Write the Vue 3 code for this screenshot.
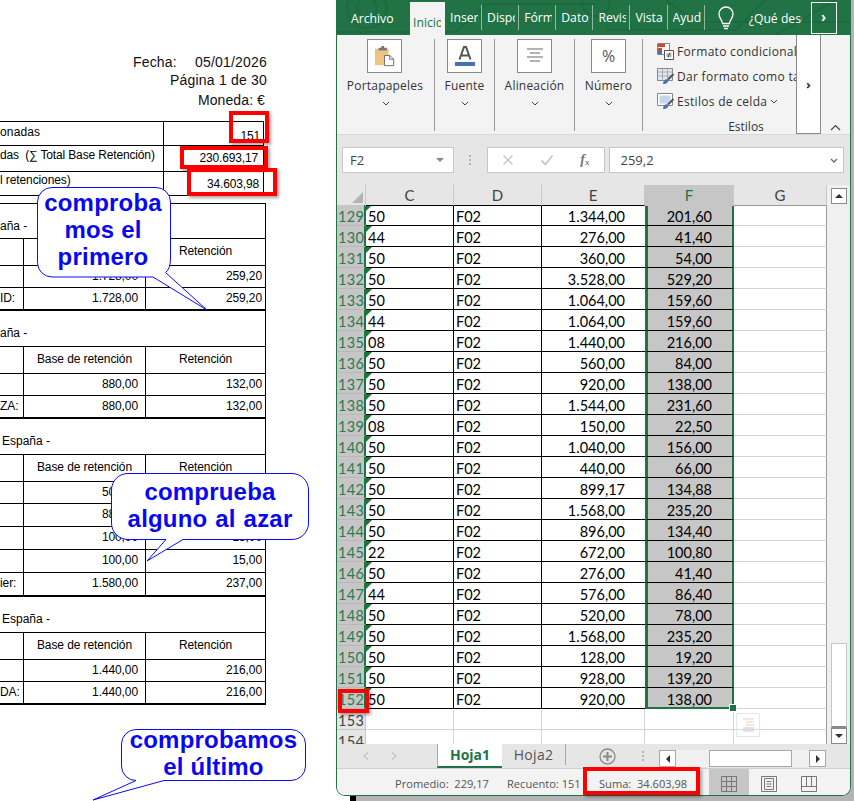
<script setup>
const sections = [
  { title: 'aña -', indent: false, rows: [['', '1.728,00', '259,20'], ['ID:', '1.728,00', '259,20']] },
  { title: 'aña -', indent: false, rows: [['', '880,00', '132,00'], ['ZA:', '880,00', '132,00']] },
  { title: 'España -', indent: true, rows: [['', '500,00', '75,00'], ['', '880,00', '132,00'], ['', '100,00', '15,00'], ['', '100,00', '15,00'], ['ier:', '1.580,00', '237,00']] },
  { title: 'España -', indent: true, rows: [['', '1.440,00', '216,00'], ['DA:', '1.440,00', '216,00']] }
]
const tabs = ['Inicio', 'Insertar', 'Disposición', 'Fórmulas', 'Datos', 'Revisar', 'Vista', 'Ayuda']
const raw = `129 50 1.344,00 201,60
130 44 276,00 41,40
131 50 360,00 54,00
132 50 3.528,00 529,20
133 50 1.064,00 159,60
134 44 1.064,00 159,60
135 08 1.440,00 216,00
136 50 560,00 84,00
137 50 920,00 138,00
138 50 1.544,00 231,60
139 08 150,00 22,50
140 50 1.040,00 156,00
141 50 440,00 66,00
142 50 899,17 134,88
143 50 1.568,00 235,20
144 50 896,00 134,40
145 22 672,00 100,80
146 50 276,00 41,40
147 44 576,00 86,40
148 50 520,00 78,00
149 50 1.568,00 235,20
150 50 128,00 19,20
151 50 928,00 139,20
152 50 920,00 138,00`
const rows = raw.split('\n').map(l => l.split(' '))
const groups = [
  { label: 'Portapapeles', cls: 'g1', icon: 'paste' },
  { label: 'Fuente', cls: 'g2', icon: 'font' },
  { label: 'Alineación', cls: 'g3', icon: 'align' },
  { label: 'Número', cls: 'g4', icon: 'num' }
]
</script>

<template>
  <div class="page">
    <section class="doc">
      <div class="dochead">
        <div class="fecha"><span>Fecha:</span><span>05/01/2026</span></div>
        <div>Página 1 de 30</div>
        <div class="moneda">Moneda: €</div>
      </div>
      <div class="summary">
        <div class="sumrow r1"><span class="sl">onadas</span><span class="sv">151</span></div>
        <div class="sumrow r2"><span class="sl">das&nbsp; (∑ Total Base Retención)</span><span class="sv">230.693,17</span></div>
        <div class="sumrow r3"><span class="sl">l retenciones)</span><span class="sv">34.603,98</span></div>
      </div>
      <div class="sec" v-for="(s, si) in sections" :key="si" :class="{ first: si === 0 }">
        <div class="sectitle" :class="{ indent: s.indent }">{{ s.title }}</div>
        <div class="tr head"><div></div><div>Base de retención</div><div>Retención</div></div>
        <div class="tr" v-for="(r, i) in s.rows" :key="i" :class="{ tall: s.rows.length > 2 && i > 0 }">
          <div class="lab">{{ r[0] }}</div><div class="n1">{{ r[1] }}</div><div class="n2">{{ r[2] }}</div>
        </div>
      </div>
    </section>

    <i class="under"></i>
    <i class="blackbit"></i>

    <section class="xl">
      <header class="titlebar">
        <svg class="pattern" viewBox="0 0 515 35" preserveAspectRatio="none">
          <g fill="none" stroke="#1d6a3f" stroke-width="2">
            <circle cx="30" cy="8" r="20" /><circle cx="30" cy="8" r="10" />
            <path d="M0 32H120L150 4H260M270 30H400L430 0M330 0L360 22H515M440 35L500 0" />
            <circle cx="260" cy="2" r="14" />
          </g>
        </svg>
        <div class="archivo">Archivo</div>
        <div class="tab" v-for="(t, i) in tabs" :key="t" :class="{ on: i === 0 }"><span>{{ t }}</span></div>
        <svg class="bulb" viewBox="0 0 20 26" width="20" height="26">
          <path d="M6.5 18.5C6.5 15 3 13.5 3 9a7 7 0 0 1 14 0c0 4.500-3.500 6-3.500 9.500z" fill="none" stroke="#fff" stroke-width="1.300" />
          <path d="M7 21h6M8 23.500h4" stroke="#fff" stroke-width="1.300" />
        </svg>
        <div class="search"><span>¿Qué desea hacer?</span></div>
        <div class="tabmore">›</div>
      </header>

      <div class="ribbon">
        <div class="group" v-for="g in groups" :key="g.label" :class="g.cls">
          <div class="bigbtn">
            <svg v-if="g.icon === 'paste'" viewBox="0 0 24 24" width="22" height="22">
              <path d="M1 4h15v18H1z" fill="#ecc681" />
              <path d="M5 3h3V1h3v2h3v3H5z" fill="#777" />
              <path d="M11.500 11.500h6l4 4v7h-10z" fill="#fff" stroke="#666" />
              <path d="M17 11.500v4h4.500" fill="none" stroke="#666" />
            </svg>
            <svg v-else-if="g.icon === 'font'" viewBox="0 0 24 24" width="24" height="24">
              <path d="M6.500 15.500 11 3h2l4.500 12.500M8 11.500h8" fill="none" stroke="#555" stroke-width="2" />
              <path d="M2 18h20v4H2z" fill="#4472b4" />
            </svg>
            <svg v-else-if="g.icon === 'align'" viewBox="0 0 24 24" width="24" height="24">
              <path d="M4 5h16M7 9h10M4 13h16M7 17h10" stroke="#666" stroke-width="1" />
            </svg>
            <span v-else class="pct">%</span>
          </div>
          <div class="glabel">{{ g.label }}</div>
          <svg class="chev" viewBox="0 0 8 5" width="8" height="5"><path d="M1 1l3 3 3-3" fill="none" stroke="#444" /></svg>
        </div>
        <div class="group g5">
          <div class="srow">
            <svg viewBox="0 0 17 17" width="17" height="17">
              <path d="M0.500 0.500h12v11h-12z" fill="#fff" stroke="#888" />
              <path d="M1 1h7v3H1z" fill="#d2492a" /><path d="M1 5h4v3H1z" fill="#d2492a" /><path d="M5 8H1v3h4z" fill="#4472b4" />
              <path d="M7.500 7.500h9v9h-9z" fill="#fff" stroke="#555" />
              <path d="M9.500 11h5M9.500 13h5M13 9.500l-2 5" stroke="#444" stroke-width=".8" />
            </svg>
            <span>Formato condicional</span>
          </div>
          <div class="srow">
            <svg viewBox="0 0 17 17" width="17" height="17">
              <path d="M0.500 0.500h15v12h-15z" fill="#dfe7f2" stroke="#888" />
              <path d="M0.500 4h15M0.500 8h15M5.500 .5v12M10.500 .5v12" stroke="#999" stroke-width=".7" />
              <path d="M16.500 6 11 11.500" stroke="#555" stroke-width="2" />
              <path d="M6 16c0-4 3-5.500 5-4.500 1 2-1 5-5 4.500z" fill="#3f78c0" />
            </svg>
            <span>Dar formato como tabla</span>
          </div>
          <div class="srow">
            <svg viewBox="0 0 17 17" width="17" height="17">
              <path d="M0.500 0.500h15v12h-15z" fill="#fff" stroke="#888" />
              <path d="M2.500 2.500h11v8h-11z" fill="#c5d5ea" />
              <path d="M16.500 6 11 11.500" stroke="#555" stroke-width="2" />
              <path d="M6 16c0-4 3-5.500 5-4.500 1 2-1 5-5 4.500z" fill="#3f78c0" />
            </svg>
            <span>Estilos de celda</span>
            <svg class="chevs" viewBox="0 0 8 5" width="8" height="5"><path d="M1 1l3 3 3-3" fill="none" stroke="#444" /></svg>
          </div>
          <div class="estilos">Estilos</div>
        </div>
        <div class="ribmore">›</div>
        <div class="collapse">
          <svg viewBox="0 0 11 7" width="11" height="7"><path d="M1 6l4.500-4.500L10 6" fill="none" stroke="#444" stroke-width="1.200" /></svg>
        </div>
      </div>

      <div class="fbar">
        <div class="namebox"><span>F2</span><i class="tri"></i></div>
        <div class="dots"><b></b><b></b><b></b></div>
        <div class="fxbox">
          <svg viewBox="0 0 12 12" width="12" height="12"><path d="M1.500 1.500l9 9M10.500 1.500l-9 9" stroke="#c8c8c8" stroke-width="1.500" /></svg>
          <svg viewBox="0 0 14 12" width="14" height="12"><path d="M1.500 6.500l4 4 7-9" fill="none" stroke="#c8c8c8" stroke-width="1.800" /></svg>
          <span class="fx">f<sub>x</sub></span>
        </div>
        <div class="input"><span>259,2</span><svg viewBox="0 0 8 5" width="8" height="5"><path d="M1 1l3 3 3-3" fill="none" stroke="#666" stroke-width="1.300" /></svg></div>
      </div>

      <div class="gridzone">
        <div class="sheet">
          <div class="colhead">
            <div class="corner"><i></i></div>
            <div class="cc">C</div><div class="cd">D</div><div class="ce">E</div><div class="cf sel">F</div><div class="cg">G</div>
          </div>
          <div class="row" v-for="(r, i) in rows" :key="r[0]" :class="{ last: i === rows.length - 1 }">
            <div class="rh">{{ r[0] }}</div>
            <div class="c cc"><i class="flag"></i>{{ r[1] }}</div>
            <div class="c cd">F02</div>
            <div class="c ce">{{ r[2] }}</div>
            <div class="c cf">{{ r[3] }}<i v-if="i === rows.length - 1" class="handle"></i></div>
            <div class="c cg"></div>
          </div>
          <div class="row blank" v-for="n in [153, 154]" :key="n">
            <div class="rh">{{ n }}</div>
            <div class="c cc"></div><div class="c cd"></div><div class="c ce"></div><div class="c cf"></div><div class="c cg"></div>
          </div>
          <svg class="quick" viewBox="0 0 24 24" width="24" height="24">
            <path d="M.5.5h23v23H.5z" fill="none" stroke="#dfeae5" />
            <path d="M7 6h11M10 9h8" stroke="#f7e6da" stroke-width="2" />
            <path d="M10 12h8" stroke="#f7e6da" stroke-width="2" />
            <path d="M7 15h11M7 18h11" stroke="#dbe6f2" stroke-width="2" />
          </svg>
        </div>
        <div class="vscroll">
          <div class="sbtn"><i class="up"></i></div>
          <div class="thumb"></div>
          <div class="sbtn"><i class="down"></i></div>
        </div>
      </div>

      <div class="sheetbar">
        <div class="nav">
          <svg viewBox="0 0 6 8" width="6" height="8"><path d="M5 .5 1 4l4 3.500" fill="none" stroke="#c4c4c4" stroke-width="1.300" /></svg>
          <svg viewBox="0 0 6 8" width="6" height="8"><path d="M1 .5 5 4 1 7.500" fill="none" stroke="#c4c4c4" stroke-width="1.300" /></svg>
        </div>
        <div class="sheettab active">Hoja1</div>
        <div class="sheettab">Hoja2</div>
        <svg class="plus" viewBox="0 0 17 17" width="17" height="17">
          <circle cx="8.500" cy="8.500" r="7.500" fill="none" stroke="#8a8a8a" stroke-width="1.300" />
          <path d="M8.500 4v9M4 8.500h9" stroke="#8a8a8a" stroke-width="2" />
        </svg>
        <div class="dots small"><b></b><b></b><b></b></div>
        <div class="hscroll">
          <div class="hbtn"><i class="lt"></i></div>
          <div class="hthumb"></div>
          <div class="hbtn"><i class="rt"></i></div>
        </div>
      </div>

      <footer class="status">
        <span class="st1">Promedio:&nbsp; 229,17</span>
        <span class="st2">Recuento: 151</span>
        <span class="st3">Suma:&nbsp; 34.603,98</span>
        <div class="view active">
          <svg viewBox="0 0 16 16" width="16" height="16"><path d="M.5.5h15v15H.5zM5.500.5v15M10.500.5v15M.5 5.500h15M.5 10.500h15" fill="none" stroke="#777" /></svg>
        </div>
        <div class="view">
          <svg viewBox="0 0 16 16" width="16" height="16"><path d="M.5.5h15v15H.5z" fill="none" stroke="#777" /><path d="M3.500 2.500h9v11h-9zM5.500 5.500h5M5.500 8h5M5.500 10.500h5" fill="none" stroke="#777" /></svg>
        </div>
        <div class="view">
          <svg viewBox="0 0 16 16" width="16" height="16"><path d="M.5.5h15v15H.5zM.5 10.500h15M5.500.5v10M10.500.5v10" fill="none" stroke="#777" /></svg>
        </div>
      </footer>
    </section>

    <div class="callout c1">
      <svg viewBox="0 0 134 123" width="134" height="123">
        <path d="M15 .5H119a14.500 14.500 0 0 1 14.500 14.500V71q0 11-5 14.500L170 123 116 90H15A14.500 14.500 0 0 1 .5 75.500V15A14.500 14.500 0 0 1 15 .5z" fill="#fff" stroke="#0a0aff" stroke-width="1" />
      </svg>
      <div class="ctext">comproba<br />mos el<br />primero</div>
    </div>
    <div class="callout c2">
      <svg viewBox="0 0 198 88" width="198" height="88">
        <path d="M17 .5H181a16.500 16.500 0 0 1 16.500 16.500V50A16.500 16.500 0 0 1 181 66.500H72L36 88 55 66.500H17A16.500 16.500 0 0 1 .5 50V17A16.500 16.500 0 0 1 17 .5z" fill="#fff" stroke="#0a0aff" stroke-width="1" />
      </svg>
      <div class="ctext">comprueba<br /><span class="ws">alguno al azar</span></div>
    </div>
    <div class="callout c3">
      <svg viewBox="0 0 185 72" width="185" height="72">
        <path d="M15 .5H170a14.500 14.500 0 0 1 14.500 14.500V37A14.500 14.500 0 0 1 170 51.500H43L-28 71 15 51.500A14.500 14.500 0 0 1 .5 37V15A14.500 14.500 0 0 1 15 .5z" fill="#fff" stroke="#0a0aff" stroke-width="1" />
      </svg>
      <div class="ctext">comprobamos<br />el último</div>
    </div>

    <i class="mark m1"></i><i class="mark m2"></i><i class="mark m3"></i><i class="mark m4"></i><i class="mark m5"></i>
  </div>
</template>

<style scoped>
.page { position: relative; display: flex; width: 854px; height: 801px; overflow: hidden; background: #b4b4b4; font-family: "Liberation Sans", Arial, sans-serif; color: #000; }
.doc { width: 336px; height: 801px; flex: none; background: #fff; overflow: hidden; font-size: 12px; }
.under { position: absolute; left: 336px; top: 786px; width: 14px; height: 15px; background: #fff; }
.blackbit { position: absolute; left: 350px; top: 796px; width: 6px; height: 5px; background: #000; }
.dochead { width: 267px; padding-top: 53px; text-align: right; font-size: 14px; line-height: 19px; color: #111; letter-spacing: .2px; }
.dochead > div:nth-child(2) { margin-top: -1px; }
.fecha { display: flex; justify-content: flex-end; gap: 18px; }
.moneda { margin-top: 1px; padding-right: 2px; letter-spacing: .1px; }
.summary { width: 264px; margin-top: 11px; border-top: 1px solid #000; }
.sumrow { display: grid; grid-template-columns: 163px 1fr; border-bottom: 1px solid #000; border-right: 1px solid #000; box-sizing: border-box; }
.r1 { height: 24px; } .r2 { height: 26px; } .r3 { height: 24px; }
.sl { padding-top: 3px; letter-spacing: .15px; white-space: nowrap; line-height: 15px; }
.r2 .sl { padding-top: 2px; letter-spacing: -.15px; } .r3 .sl { padding-top: 1px; letter-spacing: -.1px; }
.sv { border-left: 1px solid #000; text-align: right; padding: 5px 3px 0 0; line-height: 15px; letter-spacing: -.15px; }
.r1 .sv { padding-top: 7px; } .r2 .sv { padding-right: 5px; } .r3 .sv { padding-top: 5px; padding-right: 4px; }
.sec { width: 266px; box-sizing: border-box; border-right: 1px solid #000; border-bottom: 2px solid #000; }
.first { margin-top: 7px; border-top: 1px solid #000; }
.sectitle { height: 35px; box-sizing: border-box; padding-top: 15px; line-height: 14px; }
.first .sectitle { height: 34px; }
.indent { padding-left: 2px; }
.tr { display: grid; grid-template-columns: 23px 122px 1fr; height: 22px; box-sizing: border-box; border-top: 1px solid #000; line-height: 21px; letter-spacing: -.1px; }
.tr.head { height: 27px; text-align: center; line-height: 24px; }
.tr.tall { height: 23px; }
.tr > div + div { border-left: 1px solid #000; }
.lab { text-align: right; white-space: nowrap; padding-right: 8px; }
.n1 { text-align: right; padding-right: 7px; }
.n2 { text-align: right; padding-right: 3px; }

.xl { width: 515px; height: 796px; flex: none; box-sizing: border-box; border: 1px solid #217346; border-top: 0; border-radius: 0 0 9px 9px; overflow: hidden; display: flex; flex-direction: column; background: #f3f3f3; font-family: "Open Sans", "Noto Sans", sans-serif; color: #333; position: relative; }
.titlebar { height: 35px; flex: none; background: #217346; display: flex; align-items: flex-end; color: #fff; font-size: 12.200px; position: relative; }
.pattern { position: absolute; inset: 0; width: 100%; height: 100%; }
.titlebar > div, .bulb { position: relative; }
.archivo { width: 73px; height: 35px; line-height: 37px; padding-left: 14px; box-sizing: border-box; }
.tab { width: 37.100px; height: 25px; margin-bottom: 5px; overflow: hidden; white-space: nowrap; line-height: 25px; padding-left: 5px; box-sizing: border-box; border-right: 1px solid #8fbba3; align-self: flex-end; }
.tab span { display: block; width: 28px; overflow: hidden; }
.tab.on { width: 35px; height: 33px; margin-bottom: 0; background: #f3f3f3; color: #217346; padding-left: 3px; line-height: 41px; border-right: 0; }
.bulb { margin: 0 0 4px 11px; flex: none; }
.search { width: 53px; margin: 0 9px 0 13px; overflow: hidden; white-space: nowrap; height: 35px; line-height: 37px; }
.tabmore { width: 26px; height: 32px; margin-bottom: 1px; box-sizing: border-box; border: 1px solid #fff; text-align: center; line-height: 28px; font-size: 14px; font-weight: 700; }

.ribbon { height: 100px; flex: none; display: flex; background: #f3f3f3; border-bottom: 1px solid #d8d8d8; box-sizing: border-box; font-size: 12px; color: #333; }
.group { position: relative; box-sizing: border-box; display: flex; flex-direction: column; align-items: center; margin: 4px 0; height: 92px; border-right: 1px solid #9a9a9a; }
.g1 { width: 98px; } .g2 { width: 60px; } .g3 { width: 80px; } .g4 { width: 68px; }
.bigbtn { width: 35px; height: 34px; box-sizing: border-box; border: 1px solid #8a8a8a; background: #fff; display: flex; align-items: center; justify-content: center; }
.g1 .bigbtn { margin-left: -2px; }
.pct { font-size: 16px; color: #555; }
.glabel { margin-top: 4px; line-height: 17px; letter-spacing: .2px; }
.g1 .glabel { margin-left: -1px; }
.chev { margin-top: 7px; }
.g5 { width: 153px; border-right: 0; align-items: flex-start; padding-left: 14px; overflow: hidden; margin: 0; height: 99px; padding-top: 4px; }
.srow { display: flex; align-items: center; height: 25px; gap: 3px; white-space: nowrap; flex: none; letter-spacing: .3px; }
.estilos { margin-top: 5px; width: 139px; text-align: center; padding-left: 39px; box-sizing: border-box; line-height: 16px; font-size: 12px; }
.ribmore { width: 25px; height: 100px; margin-top: -1px; box-sizing: border-box; border: 1px solid #8a8a8a; background: #fff; text-align: center; line-height: 98px; flex: none; font-size: 13px; font-weight: 700; }
.collapse { flex: 1; display: flex; align-items: flex-end; justify-content: center; padding-bottom: 3px; }

.fbar { height: 50px; flex: none; background: #e6e6e6; box-sizing: border-box; padding: 12px 6px 12px 5px; display: flex; font-size: 13px; color: #444; }
.namebox { width: 112px; box-sizing: border-box; background: #fff; border: 1px solid #c6c6c6; display: flex; align-items: center; justify-content: space-between; padding: 0 5px 0 7px; }
.tri { width: 0; height: 0; border: 4px solid transparent; border-top: 4px solid #888; border-bottom: 0; margin-right: 4px; }
.dots { width: 33px; display: flex; flex-direction: column; align-items: center; justify-content: center; gap: 2px; }
.dots b { width: 2px; height: 2px; background: #b5b5b5; }
.fxbox { width: 118px; box-sizing: border-box; background: #fff; border: 1px solid #c6c6c6; display: flex; align-items: center; justify-content: space-between; padding: 0 14px 0 14px; }
.fx { font-family: "Liberation Serif", serif; font-style: italic; font-weight: 700; font-size: 14px; color: #777; line-height: 1; }
.fx sub { font-size: 9px; vertical-align: -1px; }
.input { width: 236px; margin-left: 4px; box-sizing: border-box; background: #fff; border: 1px solid #c6c6c6; display: flex; align-items: center; justify-content: space-between; padding: 0 5px 0 11px; }

.gridzone { height: 559px; flex: none; display: flex; background: #e6e6e6; }
.sheet { width: 490px; height: 559px; flex: none; overflow: hidden; position: relative; font-family: Lato, sans-serif; font-size: 14.500px; color: #000; }
.colhead { display: flex; height: 21px; margin-bottom: -1px; text-align: center; line-height: 21px; color: #444; font-size: 15px; }
.colhead > div { box-sizing: border-box; border-right: 1px solid #c8c8c8; position: relative; z-index: 1; }
.colhead .cc, .colhead .cd, .colhead .ce { border-bottom: 1px solid #000; }
.colhead .cg { border-bottom: 1px solid #9a9a9a; }
.corner { width: 29px; }
.corner i { position: absolute; right: 2px; bottom: 3px; width: 0; height: 0; border-left: 11px solid transparent; border-bottom: 11px solid #b4b4b4; }
.cc { width: 88px; } .cd { width: 88px; } .ce { width: 103px; } .cf { width: 89px; } .cg { width: 93px; }
.colhead .sel { background: #c6c6c6; color: #217346; }
.row { display: flex; height: 21px; line-height: 23px; background: #fff; }
.rh { width: 29px; flex: none; box-sizing: border-box; padding-left: 1px; background: #c6c6c6; color: #2d7a50; border-bottom: 1px solid #b8b8b8; border-right: 2px solid #217346; letter-spacing: .3px; font-size: 14.500px; overflow: hidden; white-space: nowrap; }
.c { box-sizing: border-box; position: relative; border-bottom: 1px solid #000; border-right: 1px solid #000; white-space: nowrap; }
.c.cc, .c.cd { padding-left: 2px; }
.c.ce { text-align: right; padding-right: 20px; border-right: 0; }
.c.cf { text-align: right; padding-right: 20px; background: #c6c6c6; border-left: 3px solid #217346; border-right: 2px solid #217346; }
.c.cg { border-bottom: 1px solid #d4d4d4; border-right: 1px solid #9a9a9a; }
.flag { position: absolute; left: 0; top: 0; width: 0; height: 0; border-top: 6px solid #117a34; border-right: 6px solid transparent; }
.last .c.cf { border-bottom: 2px solid #217346; }
.handle { position: absolute; right: -5px; bottom: -5px; width: 6px; height: 6px; background: #217346; border: 1px solid #fff; z-index: 2; }
.blank .rh { background: #e6e6e6; color: #444; border-right: 1px solid #c8c8c8; border-bottom-color: #c8c8c8; }
.blank .c { border-color: #d4d4d4; background: #fff; border-right: 1px solid #d4d4d4; border-left: 0; }
.blank .c.ce { border-right: 1px solid #d4d4d4; }
.blank .c.cg { border-right: 1px solid #9a9a9a; }
.quick { position: absolute; left: 399px; top: 528px; }
.vscroll { width: 23px; height: 559px; box-sizing: border-box; background: #f0f0f0; padding: 3px 3px 0 4px; display: flex; flex-direction: column; }
.sbtn { height: 16px; flex: none; box-sizing: border-box; background: #fff; border: 1px solid #8a8a8a; display: flex; align-items: center; justify-content: center; }
.up { width: 0; height: 0; border: 4px solid transparent; border-bottom: 4px solid #333; border-top: 0; }
.down { width: 0; height: 0; border: 4px solid transparent; border-top: 4px solid #333; border-bottom: 0; }
.thumb { margin-top: auto; height: 85px; box-sizing: border-box; background: #fff; border: 1px solid #c6c6c6; border-bottom: 2px solid #8a8a8a; }

.sheetbar { height: 24px; flex: none; background: #e6e6e6; display: flex; align-items: stretch; font-size: 14px; box-sizing: border-box; }
.nav { width: 100px; flex: none; display: flex; gap: 22px; align-items: center; padding-left: 26px; box-sizing: border-box; }
.sheettab { width: 64px; text-align: center; line-height: 22px; color: #555; border-right: 1px solid #a8a8a8; box-sizing: border-box; margin-bottom: 3px; letter-spacing: .3px; }
.sheettab.active { background: #fff; color: #217346; font-weight: 700; border-right: 0; margin-bottom: 0; height: 24px; width: 65px; border-bottom: 2px solid #217346; border-left: 1px solid #a8a8a8; letter-spacing: 0; }
.plus { align-self: center; margin-left: 33px; flex: none; }
.dots.small { width: 18px; margin-left: 18px; }
.hscroll { display: flex; align-self: flex-start; margin: 6px 0 0 7px; background: #f0f0f0; }
.hbtn { width: 17px; height: 17px; box-sizing: border-box; background: #fff; border: 1px solid #a8a8a8; display: flex; align-items: center; justify-content: center; flex: none; }
.lt { width: 0; height: 0; border: 4px solid transparent; border-right: 4px solid #333; border-left: 0; }
.rt { width: 0; height: 0; border: 4px solid transparent; border-left: 4px solid #333; border-right: 0; }
.hthumb { width: 83px; height: 17px; box-sizing: border-box; background: #fff; border: 1px solid #a8a8a8; margin: 0 17px 0 33px; flex: none; }

.status { flex: 1; background: #f3f3f3; border-top: 1px solid #cfcfcf; display: flex; align-items: stretch; font-size: 11.100px; color: #555; line-height: 29px; box-sizing: border-box; white-space: nowrap; }
.st1 { margin-left: 58px; width: 112px; }
.st2 { width: 92px; }
.st3 { width: 110px; }
.view { width: 40px; flex: none; display: flex; align-items: center; justify-content: center; }
.view.active { background: #c6c6c6; }

.callout { position: absolute; }
.callout svg { position: absolute; left: 0; top: 0; overflow: visible; }
.ctext { position: relative; text-align: center; font-weight: 700; font-size: 24px; line-height: 27px; color: #0808f0; letter-spacing: .2px; }
.ws { word-spacing: 1px; }
.c1 { left: 37px; top: 187px; width: 134px; height: 90px; }
.c1 .ctext { margin-top: 2px; margin-left: -2px; }
.c2 { left: 111px; top: 473px; width: 198px; height: 66px; }
.c2 .ctext { padding-top: 5px; }
.c3 { left: 121px; top: 729px; width: 185px; height: 52px; }
.c3 .ctext { margin-top: -3px; }

.mark { position: absolute; box-sizing: border-box; border: 4px solid #f00; box-shadow: 2px 2px 3px rgba(0, 0, 0, .35); }
.m1 { left: 229px; top: 111px; width: 40px; height: 32px; }
.m2 { left: 180px; top: 146px; width: 88px; height: 23px; }
.m3 { left: 187px; top: 168px; width: 90px; height: 28px; }
.m4 { left: 338px; top: 689px; width: 31px; height: 24px; }
.m5 { left: 583px; top: 767px; width: 117px; height: 28px; }
</style>
